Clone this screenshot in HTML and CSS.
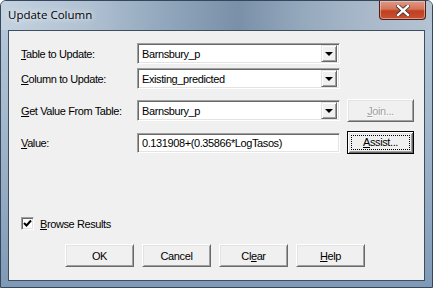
FILE: index.html
```html
<!DOCTYPE html>
<html lang="en">
<head>
  <meta charset="UTF-8">
  <title>Update Column</title>
  <link rel="stylesheet" href="styles.css">
</head>
<body>
  <div class="window">
    <div class="titlebar">
      <span class="title">Update Column</span>
      <button class="close" aria-label="Close">
        <svg width="14" height="11" viewBox="0 0 14 11">
          <path d="M2 1 L12 10 M12 1 L2 10" stroke="#3a2a2a" stroke-width="4" stroke-linecap="square"/>
          <path d="M2 1 L12 10 M12 1 L2 10" stroke="#fff" stroke-width="2.4" stroke-linecap="square"/>
        </svg>
      </button>
    </div>

    <div class="client">
      <div class="row">
        <label class="label"><u>T</u>able to Update:</label>
        <div class="combo"><span class="combo-text">Barnsbury_p</span><span class="drop"></span></div>
      </div>

      <div class="row row-tight">
        <label class="label"><u>C</u>olumn to Update:</label>
        <div class="combo"><span class="combo-text">Existing_predicted</span><span class="drop"></span></div>
      </div>

      <div class="row row-wide">
        <label class="label"><u>G</u>et Value From Table:</label>
        <div class="combo"><span class="combo-text">Barnsbury_p</span><span class="drop"></span></div>
        <button class="btn disabled"><u>J</u>oin...</button>
      </div>

      <div class="row row-mid">
        <label class="label"><u>V</u>alue:</label>
        <div class="edit">0.131908+(0.35866*LogTasos)</div>
        <button class="btn focused"><span class="focus-ring"><u>A</u>ssist...</span></button>
      </div>

      <label class="check">
        <span class="box">
          <svg width="9" height="9" viewBox="0 0 9 9"><path d="M1 4 L3.5 6.5 L8 1.5" fill="none" stroke="#000" stroke-width="2"/></svg>
        </span>
        <span><u>B</u>rowse Results</span>
      </label>

      <div class="actions">
        <button class="btn">OK</button>
        <button class="btn">Cancel</button>
        <button class="btn">Cl<u>e</u>ar</button>
        <button class="btn"><u>H</u>elp</button>
      </div>
    </div>
  </div>
</body>
</html>
```

FILE: styles.css
```css
body {
  margin: 0;
  background: #fff;
}

.window {
  width: 433px;
  height: 288px;
  box-sizing: border-box;
  border: 1px solid #34475c;
  border-radius: 6px 6px 0 0;
  background: linear-gradient(to bottom, #b9cadb 0%, #a5b9cd 40%, #7f9ab6 100%);
  display: flex;
  flex-direction: column;
}

.titlebar {
  height: 29px;
  display: flex;
  align-items: flex-start;
  justify-content: space-between;
  border-radius: 5px 5px 0 0;
  background: linear-gradient(to right, #c4d2e0 0%, #b0c1d2 20%, #8ea4ba 40%, #7990a8 55%, #95a9bd 70%, #a9b9ca 85%, #b4c3d2 100%);
}

.title {
  font-family: "Open Sans", "Noto Sans", sans-serif;
  font-size: 11.5px;
  color: #000;
  margin: 6px 0 0 7px;
  text-shadow: 0 0 8px #e8eef5, 0 0 4px #e8eef5;
}

.close {
  width: 47px;
  height: 19px;
  margin-right: 6px;
  padding: 0;
  border: 1px solid #4b1f1a;
  border-top: none;
  border-radius: 0 0 4px 4px;
  background: linear-gradient(to bottom, #e09a86 0%, #d4735a 45%, #c0401f 55%, #c85036 100%);
  box-shadow: inset 0 0 0 1px rgba(255, 220, 200, 0.5);
  display: flex;
  align-items: center;
  justify-content: center;
}

.client {
  flex: 1;
  margin: 0 7px 6px 7px;
  border: 1px solid #3f4e5e;
  background: #f0f0f0;
  font-family: "Liberation Sans", Arial, sans-serif;
  font-size: 11px;
  letter-spacing: -0.4px;
  color: #000;
  padding: 12px 0 0 12px;
}

.row {
  display: flex;
  align-items: center;
  height: 21px;
}

.row-tight { margin-top: 4px; }
.row-wide { margin-top: 11px; }
.row-mid { margin-top: 11px; }

.label {
  width: 116px;
  flex: none;
  padding-top: 1px;
}

.combo,
.edit {
  width: 203px;
  height: 21px;
  box-sizing: border-box;
  border: 1px solid;
  border-color: #a0a0a0 #fff #fff #a0a0a0;
  box-shadow: inset 1px 1px 0 #696969, inset -1px -1px 0 #e3e3e3;
  background: #fff;
  display: flex;
  align-items: center;
  padding: 1px 2px 1px 4px;
}

.combo-text {
  flex: 1;
}

.drop {
  width: 16px;
  height: 17px;
  box-sizing: border-box;
  background: #f0f0f0;
  border: 1px solid;
  border-color: #e3e3e3 #696969 #696969 #e3e3e3;
  box-shadow: inset 1px 1px 0 #fff, inset -1px -1px 0 #a0a0a0;
  display: flex;
  align-items: center;
  justify-content: center;
}

.drop::after {
  content: "";
  border-left: 4px solid transparent;
  border-right: 4px solid transparent;
  border-top: 4px solid #000;
  margin-top: 1px;
}

.edit {
  height: 20px;
}

.btn {
  width: 68px;
  height: 23px;
  flex: none;
  padding: 0;
  font: inherit;
  letter-spacing: inherit;
  color: #000;
  background: #f0f0f0;
  border: 1px solid;
  border-color: #fff #696969 #696969 #fff;
  box-shadow: inset 1px 1px 0 #e3e3e3, inset -1px -1px 0 #a0a0a0;
}

.row .btn {
  width: 67px;
  margin-left: 7px;
}

.disabled {
  color: #a0a0a0;
  text-shadow: 1px 1px 0 #fff;
}

.focused {
  border: 1px solid #000;
  box-shadow: inset 1px 1px 0 #fff, inset -1px -1px 0 #696969, inset 2px 2px 0 #e3e3e3, inset -2px -2px 0 #a0a0a0;
  padding: 3px;
}

.focus-ring {
  display: block;
  height: 100%;
  box-sizing: border-box;
  border: 1px dotted #000;
  line-height: 13px;
}

.check {
  display: flex;
  align-items: center;
  gap: 6px;
  margin-top: 64px;
}

.box {
  width: 13px;
  height: 13px;
  box-sizing: border-box;
  border: 1px solid;
  border-color: #a0a0a0 #fff #fff #a0a0a0;
  box-shadow: inset 1px 1px 0 #696969, inset -1px -1px 0 #e3e3e3;
  background: #fff;
  display: flex;
  align-items: center;
  justify-content: center;
}

.actions {
  display: flex;
  gap: 8px;
  margin: 14px 0 0 44px;
}

.actions .btn {
  width: 69px;
}
```
